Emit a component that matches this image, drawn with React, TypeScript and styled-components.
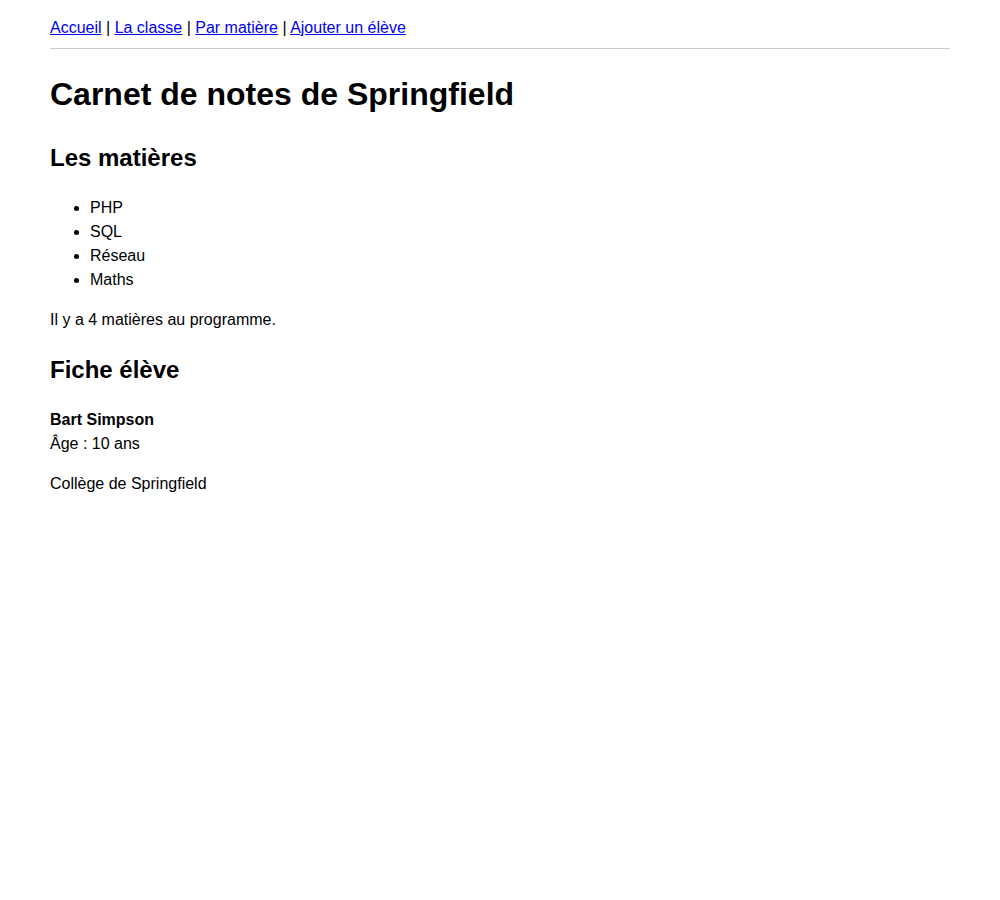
import styled, { createGlobalStyle } from 'styled-components';

const GlobalStyle = createGlobalStyle`
  body {
    margin: 0;
    background: #fff;
    color: #000;
    font-family: "Liberation Sans", Arial, sans-serif;
    font-size: 16px;
    line-height: 1.5;
  }
`;

const Page = styled.div`
  max-width: 900px;
  margin: 0 auto;
  padding: 8px 0;
`;

const Nav = styled.nav`
  padding: 8px 0;
  border-bottom: 1px solid #ccc;
`;

const NavLink = styled.a`
  color: #0000ee;
  text-decoration: underline;
`;

const Title = styled.h1`
  font-size: 32px;
  font-weight: 700;
  margin: 21.44px 0;
`;

const Heading = styled.h2`
  font-size: 24px;
  font-weight: 700;
  margin: 19.92px 0;
`;

const List = styled.ul`
  margin: 16px 0;
  padding-left: 40px;
`;

const Text = styled.p`
  margin: 16px 0;
`;

const links = ['Accueil', 'La classe', 'Par matière', 'Ajouter un élève'];
const subjects = ['PHP', 'SQL', 'Réseau', 'Maths'];

export default function App() {
  return (
    <>
      <GlobalStyle />
      <Page>
        <Nav>
          {links.map((l, i) => (
            <span key={l}>
              {i > 0 && ' | '}
              <NavLink href="#">{l}</NavLink>
            </span>
          ))}
        </Nav>
        <Title>Carnet de notes de Springfield</Title>
        <Heading>Les matières</Heading>
        <List>
          {subjects.map((s) => (
            <li key={s}>{s}</li>
          ))}
        </List>
        <Text>Il y a {subjects.length} matières au programme.</Text>
        <Heading>Fiche élève</Heading>
        <Text>
          <strong>Bart Simpson</strong>
          <br />
          Âge : 10 ans
        </Text>
        <Text>Collège de Springfield</Text>
      </Page>
    </>
  );
}
